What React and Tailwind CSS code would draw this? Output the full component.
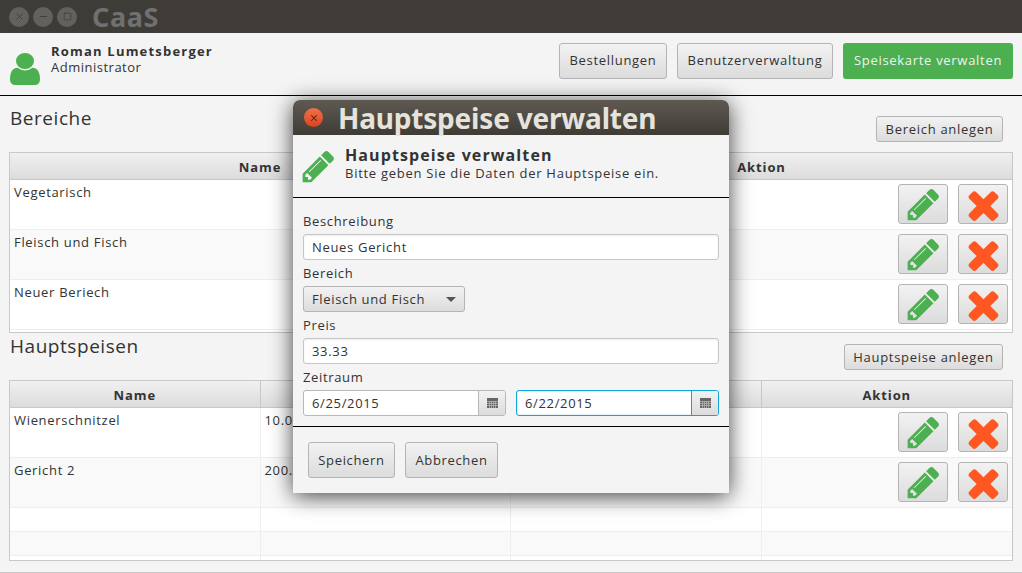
import { X, Minus, Square } from "lucide-react";

const PENCIL =
  "M491 1536l91-91-235-235-91 91v107h128v128h107zm523-928q0-22-22-22-10 0-17 7l-542 542q-7 7-7 17 0 22 22 22 10 0 17-7l542-542q7-7 7-17zm-54-192l416 416-832 832h-416v-416zm683 96q0 53-37 90l-166 166-416-416 166-165q36-38 90-38 53 0 91 38l235 234q37 39 37 91z";
const TIMES =
  "M1490 1322q0 40-28 68l-136 136q-28 28-68 28t-68-28l-294-294-294 294q-28 28-68 28t-68-28l-136-136q-28-28-28-68t28-68l294-294-294-294q-28-28-28-68t28-68l136-136q28-28 68-28t68 28l294 294 294-294q28-28 68-28t68 28l136 136q28 28 28 68t-28 68l-294 294 294 294q28 28 28 68z";
const USER =
  "M1536 1399q0 109-62.500 187t-150.500 78h-854q-88 0-150.500-78t-62.500-187q0-85 8.500-160.500t31.500-151.500 58.500-130 94-88.500 134.500-34.500q131 128 313 128t313-128q76 0 134.500 34.500t94 88.500 58.500 130 31.500 151.500 8.500 160.500zm-256-887q0 159-112.500 271.500t-271.500 112.500-271.500-112.500-112.500-271.500 112.500-271.500 271.500-112.500 271.500 112.500 112.500 271.500z";

function Icon({ d, className, viewBox = "0 0 1792 1792" }) {
  return (
    <svg viewBox={viewBox} preserveAspectRatio="none" className={`shrink-0 ${className}`} fill="currentColor" aria-hidden>
      <path d={d} />
    </svg>
  );
}

function Btn({ children, className = "" }) {
  return (
    <div
      className={`flex shrink-0 items-center justify-center rounded-[3px] border border-[#b4b4b4] bg-gradient-to-b from-[#f2f2f2] to-[#dcdcdc] text-[#333] ${className}`}
    >
      {children}
    </div>
  );
}

function ActionCell() {
  return (
    <div className="-mt-[3px] flex justify-end gap-[10px] pr-[4px] pt-[4px]">
      <Btn className="h-[40px] w-[50px]">
        <Icon d={PENCIL} className="h-[37px] w-[37px] text-[#4caf50]" />
      </Btn>
      <Btn className="h-[40px] w-[50px]">
        <Icon d={TIMES} className="h-[45px] w-[45px] text-[#ff5722]" />
      </Btn>
    </div>
  );
}

function HeadCell({ children, last }) {
  return (
    <div
      className={`flex h-[27px] items-center justify-center border-b border-[#c8c8c8] bg-gradient-to-b from-[#f0f0f0] to-[#dcdcdc] pt-[3px] text-[13px] font-bold tracking-[0.9px] ${last ? "" : "border-r"}`}
    >
      {children}
    </div>
  );
}

function Section({ title, action, actionClass, head, rows, cols }) {
  return (
    <section className="flex flex-col">
      <div className="flex items-start justify-between">
        <h2 className="-mt-[3px] pl-[10px] text-[19px] leading-[26px] tracking-[0.55px]">{title}</h2>
        <Btn className={`mr-[19px] mt-[8px] h-[26px] pt-[1px] text-[13px] tracking-[0.7px] ${actionClass}`}>{action}</Btn>
      </div>
      <div className="mx-[9px] mt-[10px] h-[181px] overflow-hidden border border-[#c8c8c8] bg-white">
        <div className={`grid ${cols}`}>
          {head.map((h, i) => (
            <HeadCell key={h + i} last={i === head.length - 1}>
              {h}
            </HeadCell>
          ))}
        </div>
        {rows.map((r, i) => (
          <div
            key={i}
            className={`grid border-b border-[#eee] ${cols} ${i % 2 ? "bg-[#f9f9f9]" : "bg-white"} ${r.tall ? "h-[50px]" : "h-[24px]"}`}
          >
            {r.cells.map((c, j) => (
              <div
                key={j}
                className={`pl-[4px] pt-[3px] text-[13px] leading-[18px] tracking-[0.68px] ${j < r.cells.length - 1 && r.sep ? "border-r border-[#eee]" : ""}`}
              >
                {c === "actions" ? <ActionCell /> : c}
              </div>
            ))}
          </div>
        ))}
      </div>
    </section>
  );
}

function Field({ children }) {
  return (
    <div className="flex h-[26px] items-center rounded-[3px] border border-[#c6c6c6] bg-white pl-[8px] pt-[1px] text-[13px] tracking-[0.68px] shadow-[inset_0_1px_2px_rgba(0,0,0,0.08)]">
      {children}
    </div>
  );
}

function Label({ children }) {
  return <div className="flex h-[26px] items-center pt-[2px] text-[13px] tracking-[0.65px]">{children}</div>;
}

function CalendarIcon() {
  return (
    <svg viewBox="0 0 11 10" className="h-[10px] w-[11px]" aria-hidden>
      <rect width="11" height="10" fill="#666" />
      <path d="M0 3.500h11M0 5.500h11M0 7.500h11M2.500 3v7M4.500 3v7M6.500 3v7M8.500 3v7" stroke="#c8c8c8" strokeWidth="0.6" />
    </svg>
  );
}

function DateField({ value, focused }) {
  return (
    <div
      className={`flex h-[26px] flex-1 overflow-hidden rounded-[3px] border ${focused ? "border-[#0ea5d8] shadow-[inset_0_0_0_1px_#e3f4fb]" : "border-[#b8b8b8]"} bg-white`}
    >
      <div className="flex flex-1 items-center pl-[8px] pt-[1px] text-[13px] tracking-[0.65px]">{value}</div>
      <div
        className={`flex w-[27px] items-center justify-center border-l bg-gradient-to-b from-[#f2f2f2] to-[#dcdcdc] ${focused ? "border-[#0ea5d8]" : "border-[#b8b8b8]"}`}
      >
        <CalendarIcon />
      </div>
    </div>
  );
}

function Dialog() {
  return (
    <div className="absolute left-[293px] top-[100px] flex h-[393px] w-[436px] flex-col rounded-t-[7px] bg-[#f4f4f4] shadow-[0_3px_22px_rgba(0,0,0,0.75)]">
      <div className="flex h-[35px] items-center rounded-t-[7px] bg-gradient-to-b from-[#5e5a52] to-[#3f3c36] pl-[11px]">
        <div className="flex h-[19px] w-[19px] items-center justify-center rounded-full bg-gradient-to-b from-[#f0704a] to-[#d8431b] text-[#5a2010]">
          <X size={10} strokeWidth={2.5} />
        </div>
        <span className="ml-[15px] pt-[1px] font-['Noto_Sans'] text-[28px] font-bold leading-[34px] tracking-[-0.2px] text-[#e6e2dc]">
          Hauptspeise verwalten
        </span>
      </div>
      <div className="flex h-[63px] items-center border-b border-black pl-[7px]">
        <Icon d={PENCIL} className="h-[37px] w-[37px] text-[#4caf50]" />
        <div className="-mt-[4px] ml-[8px]">
          <div className="text-[16px] font-bold leading-[18px] tracking-[1.1px]">Hauptspeise verwalten</div>
          <div className="text-[13px] leading-[18px] tracking-[0.73px]">Bitte geben Sie die Daten der Hauptspeise ein.</div>
        </div>
      </div>
      <div className="flex flex-col border-b border-black p-[10px]">
        <Label>Beschreibung</Label>
        <Field>Neues Gericht</Field>
        <Label>Bereich</Label>
        <Btn className="h-[26px] w-[162px] px-[8px] pt-[1px] text-[13px] tracking-[0.65px]">
          <div className="flex w-full items-center justify-between">
            <span>Fleisch und Fisch</span>
            <span className="h-0 w-0 border-x-[5px] border-t-[5px] border-x-transparent border-t-[#555]" />
          </div>
        </Btn>
        <Label>Preis</Label>
        <Field>33.33</Field>
        <Label>Zeitraum</Label>
        <div className="flex gap-[10px]">
          <DateField value="6/25/2015" />
          <DateField value="6/22/2015" focused />
        </div>
      </div>
      <div className="flex gap-[10px] px-[15px] pt-[15px]">
        <Btn className="h-[36px] w-[87px] pt-[1px] text-[13px] tracking-[0.65px]">Speichern</Btn>
        <Btn className="h-[36px] w-[93px] pt-[1px] text-[13px] tracking-[0.65px]">Abbrechen</Btn>
      </div>
    </div>
  );
}

export default function App() {
  const bereiche = ["Vegetarisch", "Fleisch und Fisch", "Neuer Beriech"];
  const speisen = [
    ["Wienerschnitzel", "10.00"],
    ["Gericht 2", "200.00"],
  ];

  return (
    <div className="relative h-[573px] w-[1022px] overflow-hidden bg-[#f4f4f4] font-['Open_Sans'] text-[#333]">
      <div className="flex h-[33px] items-center bg-[#3f3c37] pl-[9px]">
        <div className="flex gap-[4px]">
          {[X, Minus, Square].map((I, i) => (
            <div key={i} className="flex h-[20px] w-[20px] items-center justify-center rounded-full bg-[#63615d] text-[#3f3d39]">
              <I size={i === 2 ? 9 : 11} strokeWidth={2} />
            </div>
          ))}
        </div>
        <span className="ml-[15px] font-['Noto_Sans'] text-[27px] font-bold leading-[33px] tracking-[0.6px] text-[#6f7071]">CaaS</span>
      </div>

      <header className="flex h-[63px] items-start justify-between border-b border-black px-[9px] pt-[10px]">
        <div className="flex items-start">
          <Icon d={USER} viewBox="256 128 1280 1536" className="ml-[1px] mt-[10px] h-[32px] w-[30px] text-[#4caf50]" />
          <div className="ml-[11px]">
            <div className="text-[13px] font-bold leading-[17px] tracking-[1.2px]">Roman Lumetsberger</div>
            <div className="text-[13px] leading-[15px] tracking-[0.5px]">Administrator</div>
          </div>
        </div>
        <div className="flex gap-[10px]">
          <Btn className="h-[36px] w-[108px] text-[13px] tracking-[0.7px]">Bestellungen</Btn>
          <Btn className="h-[36px] w-[156px] text-[13px] tracking-[0.7px]">Benutzerverwaltung</Btn>
          <div className="flex h-[36px] w-[170px] items-center justify-center rounded-[3px] bg-[#4caf50] text-[13px] tracking-[0.7px] text-[#f2f2f2]">
            Speisekarte verwalten
          </div>
        </div>
      </header>

      <main className="flex flex-col gap-[3px] border-b border-[#c8c8c8] pb-[11px] pt-[12px]">
        <Section
          title="Bereiche"
          action="Bereich anlegen"
          actionClass="w-[127px]"
          head={["Name", "Aktion"]}
          cols="grid-cols-2"
          rows={bereiche.map((b) => ({ tall: true, cells: [b, "actions"] }))}
        />
        <Section
          title="Hauptspeisen"
          action="Hauptspeise anlegen"
          actionClass="w-[159px]"
          head={["Name", "", "", "Aktion"]}
          cols="grid-cols-4"
          rows={[
            ...speisen.map(([n, p]) => ({ tall: true, sep: true, cells: [n, p, "", "actions"] })),
            { sep: true, cells: ["", "", "", ""] },
            { sep: true, cells: ["", "", "", ""] },
            { sep: true, cells: ["", "", "", ""] },
          ]}
        />
      </main>

      <Dialog />
    </div>
  );
}
